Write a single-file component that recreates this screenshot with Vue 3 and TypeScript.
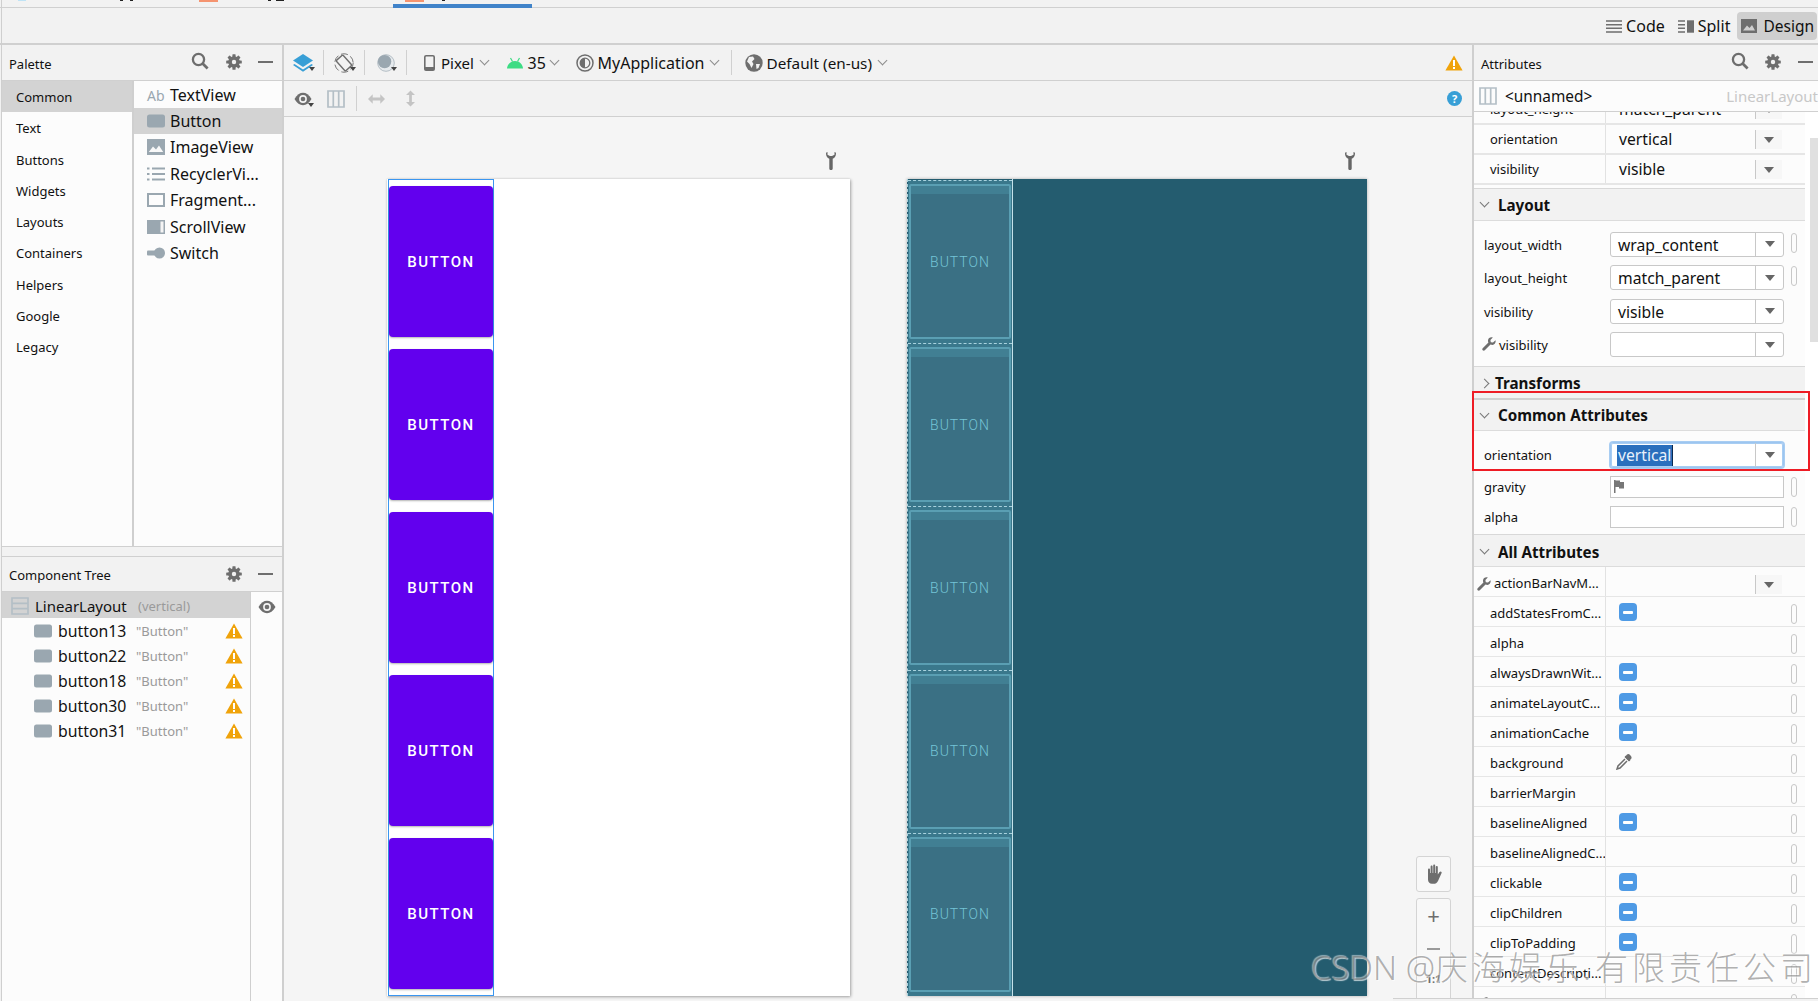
<template>
  <div class="ide">
    <!-- 图标定义 -->
    <svg class="icon-defs" aria-hidden="true">
      <symbol id="i-search" viewBox="0 0 18 18"><circle cx="7.5" cy="7.5" r="5.6" fill="none" stroke="#6e6e6e" stroke-width="2.3" /><path d="M11.6 11.6 16.6 16.6" stroke="#6e6e6e" stroke-width="2.8" /></symbol>
      <symbol id="i-gear" viewBox="0 0 16 16">
        <g fill="#6e6e6e"><rect x="6.4" y="0.2" width="3.2" height="15.6" rx=".6" /><rect x="6.4" y="0.2" width="3.2" height="15.6" rx=".6" transform="rotate(45 8 8)" /><rect x="6.4" y="0.2" width="3.2" height="15.6" rx=".6" transform="rotate(90 8 8)" /><rect x="6.4" y="0.2" width="3.2" height="15.6" rx=".6" transform="rotate(135 8 8)" /><circle cx="8" cy="8" r="5.8" /></g>
        <circle cx="8" cy="8" r="2.2" fill="#f2f2f2" />
      </symbol>
      <symbol id="i-warn" viewBox="0 0 18 16"><path d="M9 .5 17.6 15.6H.4Z" fill="#f0a30a" /><rect x="8" y="5" width="2" height="6" fill="#fff" /><rect x="8" y="12" width="2" height="2" fill="#fff" /></symbol>
      <symbol id="i-eye" viewBox="0 0 18 14"><path d="M.5 7C3 2.6 5.8.8 9 .8s6 1.800 8.500 6.200C15 11.400 12.200 13.200 9 13.200S3 11.400.5 7Z" fill="#6e6e6e" /><circle cx="9" cy="7" r="3.900" fill="#f4f4f4" /><circle cx="9" cy="7" r="2.300" fill="#6e6e6e" /></symbol>
      <symbol id="i-columns" viewBox="0 0 18 18"><path d="M1 1H17V17H1ZM6.300 1V17M11.700 1V17" fill="none" stroke="#b4bfc6" stroke-width="1.700" /></symbol>
      <symbol id="i-wrench" viewBox="0 0 14 14"><path d="M13.500 3.200 11 5.600 8.800 5.200 8.400 3 10.800.6C8.600-.2 6.200 1.200 6 3.400 5.900 4.300 6.100 4.900 6.400 5.500L.7 11.200C.1 11.800.1 12.700.7 13.300S2.200 13.900 2.800 13.300L8.500 7.600C9.100 7.900 9.700 8 10.500 8 12.700 7.800 14.200 5.400 13.500 3.200Z" fill="#6e6e6e" /></symbol>
      <symbol id="i-tool" viewBox="0 0 10 18"><path d="M0 1.500C0 4.200 1.200 6 3.300 6.800V16.400C3.300 18.400 6.700 18.400 6.700 16.400V6.800C8.800 6 10 4.200 10 1.500 10 .6 9.500 .1 8.500 0V2.800L6 4H4L1.500 2.800V0C.5 .1 0 .6 0 1.500Z" fill="#666" /></symbol>
      <symbol id="i-btn" viewBox="0 0 18 14"><rect width="18" height="13" y=".5" rx="2.500" fill="#9aa7b0" /></symbol>
      <symbol id="i-image" viewBox="0 0 18 16"><rect width="18" height="16" fill="#9aa7b0" /><path d="M1.800 13 6 7.500 9 10.500 12 6.500 16.200 13Z" fill="#f8f8f8" /></symbol>
      <symbol id="i-list" viewBox="0 0 18 14"><path d="M0 1.500H2.500M5 1.500H18M0 7H2.500M5 7H18M0 12.500H2.500M5 12.500H18" stroke="#9aa7b0" stroke-width="2" /></symbol>
      <symbol id="i-frame" viewBox="0 0 18 14"><rect x="1" y="1" width="16" height="12" fill="none" stroke="#9aa7b0" stroke-width="2" /></symbol>
      <symbol id="i-scroll" viewBox="0 0 18 14"><rect width="18" height="14" fill="#9aa7b0" /><rect x="13.500" y="1.500" width="3" height="11" fill="#f4f4f4" /></symbol>
      <symbol id="i-switch" viewBox="0 0 18 12"><rect y="3.500" width="9" height="5" rx="1" fill="#9aa7b0" /><circle cx="12.500" cy="6" r="5.500" fill="#9aa7b0" /></symbol>
      <symbol id="i-linear" viewBox="0 0 18 18"><path d="M1 1H17V17H1ZM1 6.300H17M1 11.700H17" fill="none" stroke="#b4bfc6" stroke-width="1.700" /></symbol>
      <symbol id="i-layers" viewBox="0 0 20 18"><path d="M10 0 20 6.500 10 13 0 6.500Z" fill="#389fd6" /><path d="M1.500 10 10 15.500 18.500 10 20 11 10 17.800 0 11Z" fill="#389fd6" /></symbol>
      <symbol id="i-rotate" viewBox="0 0 20 20"><circle cx="10" cy="10" r="9.200" fill="none" stroke="#777" stroke-width="1" stroke-dasharray="7 3" /><rect x="5.500" y="3" width="9" height="14" rx="1" fill="#f2f2f2" stroke="#6e6e6e" stroke-width="1.400" transform="rotate(-42 10 10)" /></symbol>
      <symbol id="i-moon" viewBox="0 0 18 18"><circle cx="9" cy="9" r="8.300" fill="#e6eaed" stroke="#b4bec5" /><circle cx="7.600" cy="7.600" r="6.700" fill="#9aa7b0" /></symbol>
      <symbol id="i-phone" viewBox="0 0 11 16"><rect x=".8" y=".8" width="9.400" height="14.400" rx="1.300" fill="none" stroke="#6e6e6e" stroke-width="1.600" /><rect x=".8" y="12" width="9.400" height="3.200" fill="#6e6e6e" /></symbol>
      <symbol id="i-android" viewBox="0 0 16 12"><path d="M0 11.500C.3 7.500 3.500 4 8 4s7.700 3.500 8 7.500Z" fill="#3ddc84" /><path d="M3.500 1 5.500 4.500M12.500 1 10.500 4.500" stroke="#3ddc84" stroke-width="1.200" /></symbol>
      <symbol id="i-theme" viewBox="0 0 18 18"><circle cx="9" cy="9" r="8" fill="none" stroke="#6e6e6e" stroke-width="1.500" /><circle cx="9" cy="9" r="4.800" fill="none" stroke="#6e6e6e" stroke-width="1.300" /><path d="M9 4.200A4.800 4.800 0 0 0 9 13.800Z" fill="#6e6e6e" /></symbol>
      <symbol id="i-globe" viewBox="0 0 18 18"><circle cx="9" cy="9" r="8.700" fill="#6e6e6e" /><path d="M4 3 8 2.500 9.500 5 7 7.500 8.500 10 6.500 14 4.500 10 2 7.500ZM11 10 15 10 13.500 14 11.500 15Z" fill="#f2f2f2" /></symbol>
      <symbol id="i-harrow" viewBox="0 0 18 10"><path d="M0 5 5 0V3.500H13V0L18 5 13 10V6.500H5V10Z" fill="#c4c4c4" /></symbol>
      <symbol id="i-varrow" viewBox="0 0 10 18"><path d="M5 0 10 5H6.500V13H10L5 18 0 13H3.500V5H0Z" fill="#c4c4c4" /></symbol>
      <symbol id="i-code" viewBox="0 0 16 13"><path d="M0 1H16M0 4.700H16M0 8.300H16M0 12H16" stroke="#6e6e6e" stroke-width="1.400" /></symbol>
      <symbol id="i-split" viewBox="0 0 16 13"><path d="M0 1H7M0 4.700H7M0 8.300H7M0 12H7" stroke="#6e6e6e" stroke-width="1.400" /><rect x="9" y=".3" width="7" height="12.400" fill="#6e6e6e" /></symbol>
      <symbol id="i-design" viewBox="0 0 16 14"><rect width="16" height="14" fill="#6e6e6e" /><path d="M2 11.500 6 6.500 8.500 9 11 6 14 11.500Z" fill="#cfcfcf" /></symbol>
      <symbol id="i-flag" viewBox="0 0 10 13"><path d="M0 0H1.500V13H0ZM1.500 .5H6V2H10V8.500H5V7H1.500Z" fill="#777" /></symbol>
      <symbol id="i-dropper" viewBox="0 0 16 16"><path d="M10 1.500 14.500 6 13 7.500 8.500 3Z" fill="#6e6e6e" /><path d="M11 .6C12-.3 13-.1 14.300 1.200S16 3.800 15.200 4.800L13 7 9 3Z" fill="#6e6e6e" /><path d="M9 5 2 12 1 15 4 14 11 7" fill="none" stroke="#6e6e6e" stroke-width="1.500" /></symbol>
      <symbol id="i-hand" viewBox="0 0 18 20"><path d="M3 10V5.500C3 4 5 4 5 5.500V9H5.600V2.500C5.600 1 7.600 1 7.600 2.500V9H8.200V1.500C8.200 0 10.200 0 10.200 1.500V9H10.800V3C10.800 1.500 12.800 1.500 12.800 3V10.500L14.500 8C15.500 6.800 17.300 7.800 16.500 9.200L13 17C12 19 10.500 19.800 8.500 19.800H7C4.500 19.800 3 18 3 15.500Z" fill="#6e6e6e" /></symbol>
    </svg>

    <!-- 文件标签页 -->
    <div class="tab-strip">
      <span v-for="m in tabMarks" :key="m.x" class="tab-mark" :style="{ left: m.x + 'px', width: m.w + 'px', height: m.h + 'px', background: m.c }"></span>
      <span class="tab-active"></span>
    </div>

    <!-- 视图切换 -->
    <div class="mode-bar">
      <span class="mode-item"><svg width="16" height="13"><use href="#i-code" /></svg>Code</span>
      <span class="mode-item"><svg width="16" height="13"><use href="#i-split" /></svg>Split</span>
      <span class="mode-item mode-item--on"><svg width="16" height="14"><use href="#i-design" /></svg>Design</span>
    </div>

    <div class="workspace">
      <!-- 左侧 -->
      <aside class="left-col">
        <div class="palette">
          <div class="panel-head">
            <span class="panel-title">Palette</span>
            <svg class="head-search" width="18" height="18"><use href="#i-search" /></svg>
            <svg class="head-gear" width="16" height="16"><use href="#i-gear" /></svg>
            <span class="head-minus"></span>
          </div>
          <div class="palette-body">
            <ul class="cat-list">
              <li v-for="(c, i) in categories" :key="c" class="cat-row" :class="{ 'is-on': i === 0 }">{{ c }}</li>
            </ul>
            <ul class="item-list">
              <li v-for="p in paletteItems" :key="p.name" class="item-row" :class="{ 'is-on': p.name === 'Button' }">
                <span class="item-icon">
                  <span v-if="!p.icon" class="ab">Ab</span>
                  <svg v-else width="18" :height="p.h"><use :href="'#' + p.icon" /></svg>
                </span>
                <span>{{ p.name }}</span>
              </li>
            </ul>
          </div>
        </div>

        <div class="tree">
          <div class="panel-head">
            <span class="panel-title">Component Tree</span>
            <svg class="head-gear" width="16" height="16"><use href="#i-gear" /></svg>
            <span class="head-minus"></span>
          </div>
          <div class="tree-body">
            <div class="tree-main">
              <div class="tree-root">
                <svg width="18" height="18"><use href="#i-linear" /></svg>
                <span class="tree-name">LinearLayout</span>
                <span class="tree-sub">(vertical)</span>
              </div>
              <div v-for="b in treeRows" :key="b" class="tree-row">
                <svg width="18" height="14"><use href="#i-btn" /></svg>
                <span class="tree-name">{{ b }}</span>
                <span class="tree-sub">"Button"</span>
                <svg class="tree-warn" width="18" height="16"><use href="#i-warn" /></svg>
              </div>
            </div>
            <div class="tree-side">
              <svg width="18" height="14"><use href="#i-eye" /></svg>
            </div>
          </div>
        </div>
      </aside>

      <!-- 设计区 -->
      <main class="canvas">
        <div class="toolbar">
          <svg class="t-layers" width="20" height="18"><use href="#i-layers" /></svg>
          <span class="drop-mark"></span>
          <i class="t-sep"></i>
          <svg class="t-rotate" width="20" height="20"><use href="#i-rotate" /></svg>
          <span class="drop-mark"></span>
          <i class="t-sep"></i>
          <svg class="t-moon" width="18" height="18"><use href="#i-moon" /></svg>
          <span class="drop-mark"></span>
          <i class="t-sep"></i>
          <svg class="t-phone" width="11" height="16"><use href="#i-phone" /></svg>
          <span class="t-label t-pixel">Pixel</span>
          <span class="chev"></span>
          <svg class="t-android" width="16" height="12"><use href="#i-android" /></svg>
          <span class="t-label t-api">35</span>
          <span class="chev"></span>
          <svg class="t-theme" width="18" height="18"><use href="#i-theme" /></svg>
          <span class="t-label t-app">MyApplication</span>
          <span class="chev"></span>
          <i class="t-sep t-sep--app"></i>
          <svg class="t-globe" width="18" height="18"><use href="#i-globe" /></svg>
          <span class="t-label t-locale">Default (en-us)</span>
          <span class="chev"></span>
          <svg class="t-warn" width="18" height="16"><use href="#i-warn" /></svg>
        </div>
        <div class="toolbar">
          <svg class="t-eye" width="18" height="14"><use href="#i-eye" /></svg>
          <span class="drop-mark"></span>
          <svg class="t-cols" width="18" height="18"><use href="#i-columns" /></svg>
          <i class="t-sep t-sep--cols"></i>
          <svg class="t-harrow" width="17" height="10"><use href="#i-harrow" /></svg>
          <svg class="t-varrow" width="9" height="17"><use href="#i-varrow" /></svg>
          <span class="help">?</span>
        </div>

        <div class="surface">
          <div class="device">
            <svg class="device-tool device-tool--a" width="10" height="18"><use href="#i-tool" /></svg>
            <div class="phone">
              <div class="selection">
                <div v-for="n in 5" :key="n" class="md-button">BUTTON</div>
              </div>
            </div>
          </div>
          <div class="device">
            <svg class="device-tool device-tool--b" width="10" height="18"><use href="#i-tool" /></svg>
            <div class="blueprint">
              <div class="bp-col">
                <div v-for="n in 5" :key="n" class="bp-cell">
                  <div class="bp-button"><span class="bp-band"></span>BUTTON</div>
                </div>
              </div>
            </div>
          </div>
        </div>

        <div class="zoom-tools">
          <div class="zoom-box zoom-box--hand"><svg width="18" height="20"><use href="#i-hand" /></svg></div>
          <div class="zoom-box zoom-box--group">
            <span class="zoom-plus">+</span>
            <span class="zoom-minus"></span>
            <span class="zoom-one">1:1</span>
          </div>
        </div>
      </main>

      <!-- 属性面板 -->
      <aside class="attrs">
        <div class="panel-head panel-head--attrs">
          <span class="panel-title">Attributes</span>
          <svg class="head-search" width="18" height="18"><use href="#i-search" /></svg>
          <svg class="head-gear" width="16" height="16"><use href="#i-gear" /></svg>
          <span class="head-minus"></span>
        </div>
        <div class="attr-id">
          <svg width="18" height="18"><use href="#i-columns" /></svg>
          <span class="attr-id-name">&lt;unnamed&gt;</span>
          <span class="attr-id-type">LinearLayout</span>
        </div>

        <div class="attr-scroll">
          <div class="attr-inner">
            <div class="grid-row">
              <span class="grid-label">layout_height</span>
              <span class="grid-value">match_parent</span>
              <span class="grid-drop"><b class="caret"></b></span>
            </div>
            <div class="grid-row">
              <span class="grid-label">orientation</span>
              <span class="grid-value">vertical</span>
              <span class="grid-drop"><b class="caret"></b></span>
            </div>
            <div class="grid-row grid-row--end">
              <span class="grid-label">visibility</span>
              <span class="grid-value">visible</span>
              <span class="grid-drop"><b class="caret"></b></span>
            </div>

            <div class="sec-head"><span class="sec-chev"></span>Layout</div>
            <div class="form-sec form-sec--layout">
              <div v-for="f in layoutFields" :key="f.label + f.value" class="form-row">
                <svg v-if="f.tool" class="label-wrench" width="14" height="14"><use href="#i-wrench" /></svg>
                <span class="form-label">{{ f.label }}</span>
                <span class="field">{{ f.value }}<span class="field-drop"><b class="caret"></b></span></span>
                <span v-if="f.pill" class="pill"></span>
              </div>
            </div>

            <div class="sec-head sec-head--cut"><span class="sec-chev sec-chev--right"></span>Transforms</div>
            <div class="sec-head sec-head--common"><span class="sec-chev"></span>Common Attributes</div>
            <div class="form-sec form-sec--common">
              <div class="form-row form-row--short">
                <span class="form-label">orientation</span>
                <span class="field field--focus"><span class="selected">vertical</span><span class="field-drop"><b class="caret"></b></span></span>
              </div>
              <div class="form-row form-row--short form-row--gravity">
                <span class="form-label">gravity</span>
                <span class="field field--plain"><svg width="10" height="13"><use href="#i-flag" /></svg></span>
                <span class="pill"></span>
              </div>
              <div class="form-row form-row--short">
                <span class="form-label">alpha</span>
                <span class="field field--plain"></span>
                <span class="pill"></span>
              </div>
            </div>

            <div class="sec-head sec-head--all"><span class="sec-chev"></span>All Attributes</div>
            <div v-for="a in allAttrs" :key="a.name" class="grid-row grid-row--all">
              <svg v-if="a.kind === 'tool' || a.kind === 'last'" class="label-wrench label-wrench--grid" width="14" height="14"><use href="#i-wrench" /></svg>
              <span class="grid-label" :class="{ 'grid-label--tool': a.kind === 'tool' }">{{ a.name }}</span>
              <span class="grid-cell">
                <span v-if="a.kind === 'flag'" class="minus-btn"></span>
                <svg v-else-if="a.kind === 'color'" class="dropper" width="16" height="16"><use href="#i-dropper" /></svg>
              </span>
              <span v-if="a.kind === 'tool'" class="grid-drop"><b class="caret"></b></span>
              <span v-else class="pill"></span>
            </div>
          </div>
          <div class="attr-scrollbar"></div>
        </div>

        <div class="red-box"></div>
      </aside>
    </div>

    <div class="bottom-edge"></div>
    <div class="watermark">CSDN @<span class="watermark-cn">庆海娱乐.有限责任公司</span></div>
  </div>
</template>

<script setup lang="ts">
interface PaletteItem {
  name: string
  icon?: string
  h?: number
}

interface LayoutField {
  label: string
  value: string
  pill?: boolean
  tool?: boolean
}

interface AttrRow {
  name: string
  kind?: 'flag' | 'tool' | 'color' | 'last'
}

// 顶部被裁掉的标签页残留
const tabMarks = [
  { x: 18, w: 8, h: 1, c: '#bfe3f5' },
  { x: 120, w: 3, h: 1, c: '#222' },
  { x: 130, w: 3, h: 1, c: '#222' },
  { x: 199, w: 19, h: 2, c: '#f59470' },
  { x: 268, w: 3, h: 1, c: '#222' },
  { x: 276, w: 8, h: 1, c: '#222' },
  { x: 405, w: 19, h: 2, c: '#f59470' },
  { x: 442, w: 3, h: 1, c: '#222' }
]

const categories = ['Common', 'Text', 'Buttons', 'Widgets', 'Layouts', 'Containers', 'Helpers', 'Google', 'Legacy']

const paletteItems: PaletteItem[] = [
  { name: 'TextView' },
  { name: 'Button', icon: 'i-btn', h: 14 },
  { name: 'ImageView', icon: 'i-image', h: 16 },
  { name: 'RecyclerVi...', icon: 'i-list', h: 14 },
  { name: 'Fragment...', icon: 'i-frame', h: 14 },
  { name: 'ScrollView', icon: 'i-scroll', h: 14 },
  { name: 'Switch', icon: 'i-switch', h: 12 }
]

const treeRows = ['button13', 'button22', 'button18', 'button30', 'button31']

const layoutFields: LayoutField[] = [
  { label: 'layout_width', value: 'wrap_content', pill: true },
  { label: 'layout_height', value: 'match_parent', pill: true },
  { label: 'visibility', value: 'visible' },
  { label: 'visibility', value: '', tool: true }
]

const allAttrs: AttrRow[] = [
  { name: 'actionBarNavM...', kind: 'tool' },
  { name: 'addStatesFromC...', kind: 'flag' },
  { name: 'alpha' },
  { name: 'alwaysDrawnWit...', kind: 'flag' },
  { name: 'animateLayoutC...', kind: 'flag' },
  { name: 'animationCache', kind: 'flag' },
  { name: 'background', kind: 'color' },
  { name: 'barrierMargin' },
  { name: 'baselineAligned', kind: 'flag' },
  { name: 'baselineAlignedC...' },
  { name: 'clickable', kind: 'flag' },
  { name: 'clipChildren', kind: 'flag' },
  { name: 'clipToPadding', kind: 'flag' },
  { name: 'contentDescripti...' },
  { name: '', kind: 'last' }
]
</script>

<style>
html,
body {
  margin: 0;
  background: #f2f2f2;
}
</style>

<style scoped>
* {
  box-sizing: border-box;
}

ul {
  list-style: none;
  margin: 0;
  padding: 0;
}

svg {
  display: block;
  flex: none;
}

.icon-defs {
  position: absolute;
  width: 0;
  height: 0;
}

.ide {
  position: relative;
  width: 1818px;
  height: 1001px;
  overflow: hidden;
  display: flex;
  flex-direction: column;
  background: #f2f2f2;
  color: #111;
  font-family: "Noto Sans", "Noto Sans CJK SC", sans-serif;
  font-size: 14px;
}

.ide::before {
  content: "";
  position: absolute;
  left: 1px;
  top: 0;
  bottom: 0;
  width: 1px;
  background: #cfcfcf;
  z-index: 2;
}

.tab-strip {
  position: relative;
  height: 8px;
  flex: none;
  border-bottom: 1px solid #d0d0d0;
}

.tab-mark {
  position: absolute;
  top: 0;
}

.tab-active {
  position: absolute;
  left: 393px;
  top: 4px;
  width: 139px;
  height: 4px;
  background: #4083c9;
}

.mode-bar {
  height: 37px;
  flex: none;
  display: flex;
  justify-content: flex-end;
  align-items: flex-start;
  padding: 4px 1px 0 0;
  border-bottom: 2px solid #d0d0d0;
}

.mode-item {
  display: flex;
  align-items: center;
  gap: 4px;
  height: 28px;
  padding: 0 5px;
  margin-left: 3px;
  font-size: 16px;
}

.mode-item--on {
  background: #cfcfcf;
  border-radius: 4px;
  gap: 6px;
  padding: 0 3px 0 4px;
  margin-left: 2px;
  font-size: 15.500px;
}

.workspace {
  flex: 1;
  min-height: 0;
  display: flex;
  margin-left: 2px;
}

/* 左侧面板 */
.left-col {
  width: 282px;
  flex: none;
  display: flex;
  flex-direction: column;
  border-right: 2px solid #cfcfcf;
}

.panel-head {
  position: relative;
  height: 36px;
  flex: none;
  display: flex;
  align-items: center;
  padding-left: 7px;
  border-bottom: 1px solid #d0d0d0;
  background: #f2f2f2;
}

.panel-title {
  font-size: 13px;
  padding-top: 2px;
}

.head-search {
  position: absolute;
  left: 189px;
  top: 7px;
}

.head-gear {
  position: absolute;
  left: 224px;
  top: 9px;
}

.head-minus {
  position: absolute;
  left: 256px;
  top: 16px;
  width: 15px;
  height: 2px;
  background: #6e6e6e;
}

.palette {
  height: 502px;
  flex: none;
  display: flex;
  flex-direction: column;
  border-bottom: 1px solid #d0d0d0;
}

.palette-body {
  flex: 1;
  display: flex;
  background: #fcfcfc;
}

.cat-list {
  width: 132px;
  flex: none;
  border-right: 2px solid #cfcfcf;
}

.cat-row {
  height: 31.25px;
  line-height: 33px;
  padding-left: 14px;
  font-size: 13px;
}

.cat-row.is-on {
  background: #d3d3d3;
}

.item-list {
  flex: 1;
  padding-top: 0.500px;
}

.item-row {
  height: 26.400px;
  display: flex;
  align-items: center;
  padding-left: 13px;
  font-size: 16px;
  white-space: pre;
}

.item-row.is-on {
  background: #d3d3d3;
}

.item-icon {
  width: 23px;
  flex: none;
}

.ab {
  font-size: 14px;
  color: #9aa7b0;
}

.tree {
  flex: 1;
  min-height: 0;
  display: flex;
  flex-direction: column;
  padding-top: 9px;
}

.tree > .panel-head {
  border-top: 1px solid #d0d0d0;
}

.tree-body {
  flex: 1;
  display: flex;
  background: #fcfcfc;
}

.tree-main {
  width: 249px;
  flex: none;
  border-right: 1px solid #cfcfcf;
}

.tree-side {
  flex: 1;
  padding: 8px 0 0 7px;
}

.tree-root {
  height: 26px;
  display: flex;
  align-items: center;
  padding: 1px 0 0 9px;
  background: #d3d3d3;
}

.tree-row {
  height: 25px;
  display: flex;
  align-items: center;
  padding-left: 32px;
}

.tree-row:first-of-type {
  margin-top: 1px;
}

.tree-name {
  margin-left: 6px;
  width: 72px;
  font-size: 15.800px;
}

.tree-root .tree-name {
  margin-left: 6px;
  width: 103px;
  font-size: 15px;
}

.tree-sub {
  font-size: 13px;
  color: #9a9a9a;
  margin-left: 6px;
  width: 90px;
}

.tree-root .tree-sub {
  margin-left: 0;
}

.tree-warn {
  margin-left: -1px;
}

/* 中间 */
.canvas {
  position: relative;
  width: 1188px;
  flex: none;
  display: flex;
  flex-direction: column;
  background: #f5f5f5;
}

.toolbar {
  position: relative;
  height: 36px;
  flex: none;
  display: flex;
  align-items: center;
  background: #f2f2f2;
  border-bottom: 1px solid #d0d0d0;
  font-size: 15px;
}

.drop-mark {
  width: 0;
  height: 0;
  margin: 12px 0 0 -4px;
  border: 3px solid transparent;
  border-top: 4px solid #444;
  border-bottom: 0;
}

.t-sep {
  width: 1px;
  height: 25px;
  background: #d0d0d0;
  flex: none;
}

.t-label {
  flex: none;
  white-space: nowrap;
}

.t-layers { margin-left: 9px; }
.t-layers + .drop-mark + .t-sep { margin-left: 8px; }
.t-rotate { margin-left: 10px; }
.t-rotate + .drop-mark + .t-sep { margin-left: 8px; }
.t-moon { margin-left: 12px; }
.t-moon + .drop-mark + .t-sep { margin-left: 9px; }
.t-phone { margin-left: 17px; }
.t-pixel { margin-left: 6px; width: 34.500px; }
.t-android { margin-left: 19px; }
.t-api { margin-left: 5px; width: 18.500px; font-size: 16px; }
.t-theme { margin-left: 17.500px; }
.t-app { margin-left: 4px; width: 108.500px; font-size: 16px; }
.t-sep--app { margin-left: 12.500px; }
.t-globe { margin-left: 13px; }
.t-locale { margin-left: 4px; width: 107px; font-size: 15.300px; }

.t-warn {
  position: absolute;
  left: 1161px;
  top: 10px;
}

.chev {
  width: 7px;
  height: 7px;
  flex: none;
  margin: -4px 0 0 5px;
  border-right: 1px solid #8c8c8c;
  border-bottom: 1px solid #8c8c8c;
  transform: rotate(45deg);
}

.t-eye { margin-left: 10px; }
.t-cols { margin-left: 13px; }
.t-sep--cols { margin-left: 11px; }
.t-harrow { margin-left: 11px; }
.t-varrow { margin-left: 21px; }

.help {
  position: absolute;
  left: 1163px;
  top: 10px;
  width: 15px;
  height: 15px;
  border-radius: 50%;
  background: #389fd6;
  color: #fff;
  font-size: 11px;
  font-weight: 700;
  line-height: 15px;
  text-align: center;
}

.surface {
  flex: 1;
  min-height: 0;
  display: flex;
  gap: 57px;
  padding: 35px 0 0 103px;
  background: #f5f5f5;
}

.device {
  display: flex;
  flex-direction: column;
  align-items: flex-end;
}

.device-tool {
  margin-bottom: 9px;
}

.device-tool--a {
  margin-right: 14px;
}

.device-tool--b {
  margin-right: 12px;
}

.phone {
  width: 463px;
  height: 817px;
  padding-left: 1px;
  background: #fff;
  box-shadow: 1px 1px 3px rgba(0, 0, 0, 0.3), 0 0 2px rgba(0, 0, 0, 0.12);
}

.selection {
  width: 106px;
  height: 817px;
  padding: 6px 0 0;
  border: 1px solid #3a96f0;
  display: flex;
  flex-direction: column;
  gap: 12.100px;
}

.md-button {
  height: 151px;
  flex: none;
  display: flex;
  align-items: center;
  justify-content: center;
  background: #6200ee;
  border-radius: 4px;
  box-shadow: 0 1px 2px rgba(0, 0, 0, 0.3);
  color: #fff;
  font-family: Roboto, "Liberation Sans", sans-serif;
  font-size: 15px;
  font-weight: 500;
  letter-spacing: 1.500px;
}

.blueprint {
  width: 460px;
  height: 817px;
  background: #245c6f;
  box-shadow: 0 0 3px rgba(0, 0, 0, 0.3);
}

.bp-col {
  width: 106px;
  height: 817px;
  padding-top: 1px;
  border-left: 1px dashed #a8d2de;
  border-right: 1px solid #c4e2ea;
}

.bp-cell {
  height: 163.200px;
  padding: 3px 1px 3px;
  background: #3a788c;
  border-top: 1px dashed #a8d2de;
}

.bp-button {
  position: relative;
  height: 155px;
  display: flex;
  align-items: center;
  justify-content: center;
  background: #3a7084;
  border: 2px solid #5a9fb3;
  border-radius: 2px;
  color: #74c4d6;
  font-family: Roboto, "Liberation Sans", sans-serif;
  font-size: 14px;
  font-weight: 300;
  letter-spacing: 1px;
}

.bp-band {
  position: absolute;
  left: 0;
  right: 0;
  top: 0;
  height: 8px;
  background: #417f93;
}

.zoom-tools {
  position: absolute;
  left: 1132px;
  top: 811px;
  display: flex;
  flex-direction: column;
  gap: 6px;
}

.zoom-box {
  width: 35px;
  display: flex;
  flex-direction: column;
  align-items: center;
  background: #f8f8f8;
  border: 1px solid #d4d4d4;
  border-radius: 3px;
}

.zoom-box--hand {
  height: 36px;
  justify-content: center;
}

.zoom-box--group {
  height: 120px;
  color: #6e6e6e;
}

.zoom-plus {
  font-size: 22px;
  line-height: 32px;
  height: 34px;
}

.zoom-minus {
  width: 13px;
  height: 2px;
  margin-top: 15px;
  background: #9a9a9a;
}

.zoom-one {
  margin-top: 21px;
  font-size: 11px;
  font-weight: 700;
}

/* 属性面板 */
.attrs {
  position: relative;
  flex: 1;
  min-width: 0;
  border-left: 2px solid #cfcfcf;
  display: flex;
  flex-direction: column;
  background: #fff;
}

.panel-head--attrs .head-search {
  left: 257px;
}

.panel-head--attrs .head-gear {
  left: 291px;
}

.panel-head--attrs .head-minus {
  left: 324px;
}

.attr-id {
  height: 31px;
  flex: none;
  display: flex;
  align-items: center;
  padding-left: 5px;
  background: #fcfcfc;
  border-bottom: 1px solid #d0d0d0;
  white-space: nowrap;
  overflow: hidden;
}

.attr-id-name {
  margin-left: 8px;
  width: 222px;
  font-size: 15.400px;
}

.attr-id-type {
  font-size: 15px;
  color: #c8c8c8;
}

.attr-scroll {
  position: relative;
  flex: 1;
  min-height: 0;
  overflow: hidden;
}

.attr-inner {
  width: 331px;
  margin-top: -17px;
  background: #fcfcfc;
}

.attr-scrollbar {
  position: absolute;
  left: 336px;
  top: 26px;
  width: 8px;
  height: 204px;
  background: #e0e0e0;
}

.grid-row {
  position: relative;
  height: 30px;
  display: flex;
  align-items: center;
  border-bottom: 2px solid #e6e6e6;
}

.grid-row--end {
  margin-bottom: 3px;
}

.grid-row--all {
  border-bottom-width: 1px;
}

.grid-row--all .grid-label {
  padding-top: 3px;
}

.grid-row--all .pill {
  top: 7px;
}

.grid-row--all .grid-drop {
  top: 8px;
}

.grid-label {
  width: 132px;
  height: 100%;
  flex: none;
  display: flex;
  align-items: center;
  padding-left: 16px;
  border-right: 1px solid #e2e2e2;
  font-size: 13px;
  white-space: nowrap;
  overflow: hidden;
}

.grid-label--tool {
  padding-left: 20px;
}

.grid-value {
  margin-left: 13px;
  font-size: 15.700px;
}

.grid-cell {
  flex: 1;
}

.grid-drop {
  position: absolute;
  left: 281px;
  top: 5px;
  width: 27px;
  height: 19px;
  display: flex;
  align-items: center;
  justify-content: center;
  background: #f7f7f7;
  border-left: 1px solid #c8c8c8;
}

.caret {
  width: 0;
  height: 0;
  border: 5px solid transparent;
  border-top: 6px solid #666;
  border-bottom: 0;
}

.sec-head {
  position: relative;
  height: 33px;
  display: flex;
  align-items: center;
  padding-left: 18px;
  background: #f2f2f2;
  border-bottom: 1px solid #dcdcdc;
  border-top: 1px solid #d8d8d8;
  font-size: 15.200px;
  font-weight: 700;
}

.sec-head--all {
  padding-top: 2px;
}

.sec-chev {
  width: 7px;
  height: 7px;
  flex: none;
  margin: -4px 10px 0 -11px;
  border-right: 1px solid #777;
  border-bottom: 1px solid #777;
  transform: rotate(45deg);
}

.sec-head .sec-chev--right {
  margin-top: 0;
  margin-right: 7px;
  transform: rotate(-45deg);
}

.sec-head--cut {
  height: 32px;
  overflow: hidden;
  align-items: flex-start;
  padding-top: 6px;
  border-bottom: 0;
}

.sec-head--cut .sec-chev {
  margin-top: 7px;
}

.sec-head--common {
  border-top: 2px solid #d0d0d0;
}

.form-sec {
  background: #fcfcfc;
}

.form-sec--layout {
  padding: 6.500px 0 4.500px;
}

.form-sec--layout .form-label {
  padding-top: 1px;
}

.form-sec--common {
  padding: 9px 0 2px;
}

.form-row {
  position: relative;
  height: 33.500px;
  display: flex;
  align-items: center;
  padding-left: 10px;
}

.form-row--short {
  height: 30px;
}

.form-row--gravity {
  margin-top: 2px;
}

.form-label {
  width: 126px;
  flex: none;
  font-size: 13px;
}

.label-wrench {
  position: absolute;
  left: 8px;
  top: 9px;
}

.label-wrench + .form-label {
  padding-left: 15px;
}

.label-wrench--grid {
  left: 3px;
  top: 10px;
}

.field {
  position: relative;
  width: 174px;
  height: 25px;
  flex: none;
  display: block;
  padding-left: 7px;
  line-height: 24px;
  font-size: 15.700px;
  background: #fff;
  border: 1px solid #c8c8c8;
  border-radius: 3px;
}

.field-drop {
  position: absolute;
  left: 144px;
  top: 0;
  bottom: 0;
  width: 28px;
  display: flex;
  align-items: center;
  justify-content: center;
  border-left: 1px solid #c8c8c8;
}

.field--focus {
  height: 26px;
  border: 1px solid #9cc5f0;
  box-shadow: 0 0 0 1px #a8cdf2, inset 0 0 0 1px #a8cdf2;
  padding: 2px 0 0 6px;
  line-height: 20px;
}

.selected {
  display: inline-block;
  height: 21px;
  padding: 0 1px;
  background: #2a6fbd;
  color: #e8f1fb;
  border-right: 1px solid #0c2a50;
}

.field--plain {
  height: 22px;
  border-radius: 0;
  padding: 3px 0 0 3px;
}

.pill {
  position: absolute;
  left: 317px;
  top: 5px;
  width: 6px;
  height: 20px;
  border: 1px solid #c8c8c8;
  border-radius: 3px;
  background: #fcfcfc;
}

.minus-btn {
  position: relative;
  display: block;
  width: 18px;
  height: 18px;
  margin: 1px 0 0 13px;
  border-radius: 4px;
  background: #4e9ae5;
}

.minus-btn::after {
  content: "";
  position: absolute;
  left: 4px;
  top: 7.500px;
  width: 10px;
  height: 3px;
  border-radius: 1px;
  background: #fff;
}

.dropper {
  margin: 1px 0 0 10px;
}

.red-box {
  position: absolute;
  left: -2px;
  top: 346px;
  width: 338px;
  height: 80px;
  border: 2px solid #ee1c25;
}

.bottom-edge {
  position: absolute;
  left: 1393px;
  right: 0;
  bottom: 0;
  height: 3px;
  background: #f2f2f2;
  border-top: 1px solid #d0d0d0;
}

.watermark {
  position: absolute;
  left: 1311px;
  top: 944px;
  font-size: 33px;
  line-height: 48px;
  font-weight: 300;
  white-space: nowrap;
  color: rgba(125, 125, 125, 0.62);
  text-shadow: 1px 1px 1px rgba(255, 255, 255, 0.7), -1px -1px 1px rgba(255, 255, 255, 0.5);
}

.watermark-cn {
  letter-spacing: 4px;
}
</style>
